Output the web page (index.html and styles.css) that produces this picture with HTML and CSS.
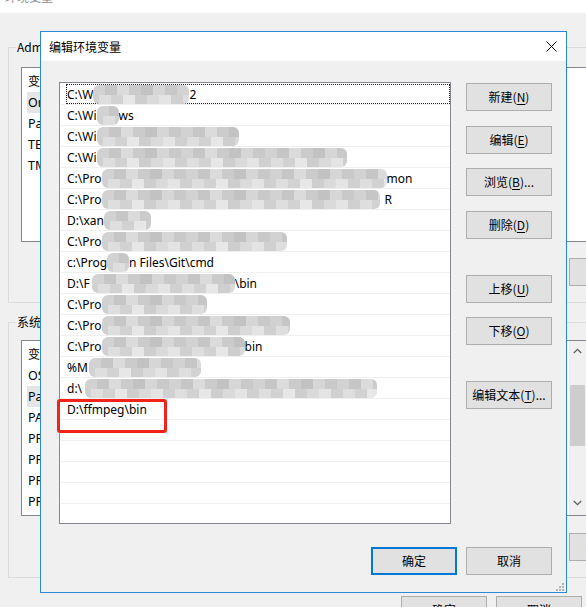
FILE: index.html
```html
<!DOCTYPE html>
<html lang="zh-CN">
<head>
<meta charset="utf-8">
<title>编辑环境变量</title>
<link rel="stylesheet" href="styles.css">
</head>
<body>
<div class="bgwin">
  <div class="bg-title"><span>环境变量</span></div>
  <div class="bg-body">
    <div class="group g1">
      <div class="glabel">Administrator 的用户变量(U)</div>
      <div class="lv lv1">
        <div class="lv-head"><span class="col1">变量</span><span>值</span></div>
        <div class="lv-row sel">OneDrive</div>
        <div class="lv-row">Path</div>
        <div class="lv-row">TEMP</div>
        <div class="lv-row">TMP</div>
      </div>
      <div class="gbtns">
        <button class="btn">新建(N)...</button>
        <button class="btn">编辑(E)...</button>
      </div>
    </div>
    <div class="group g2">
      <div class="glabel">系统变量(S)</div>
      <div class="lv lv2">
        <div class="lv-main">
          <div class="lv-head"><span class="col1">变量</span><span>值</span></div>
          <div class="lv-row">OS</div>
          <div class="lv-row sel">Path</div>
          <div class="lv-row">PATHEXT</div>
          <div class="lv-row">PROCESSOR_ARCHITECTURE</div>
          <div class="lv-row">PROCESSOR_IDENTIFIER</div>
          <div class="lv-row">PROCESSOR_LEVEL</div>
          <div class="lv-row">PROCESSOR_REVISION</div>
        </div>
        <div class="vscroll">
          <div class="sb-arrow">
            <svg width="9" height="6" viewBox="0 0 9 6"><polyline points="0.8,5 4.5,1.3 8.2,5" fill="none" stroke="#606060" stroke-width="1.3"/></svg>
          </div>
          <div class="sb-thumb"></div>
          <div class="sb-arrow sb-down">
            <svg width="9" height="6" viewBox="0 0 9 6"><polyline points="0.8,1 4.5,4.7 8.2,1" fill="none" stroke="#606060" stroke-width="1.3"/></svg>
          </div>
        </div>
      </div>
      <div class="gbtns g2btns">
        <button class="btn">新建(W)...</button>
        <button class="btn">编辑(I)...</button>
      </div>
    </div>
    <div class="bg-foot">
      <button class="btn">确定</button>
      <button class="btn">取消</button>
    </div>
  </div>
</div>

<div class="dialog">
  <div class="dlg-title">
    <span>编辑环境变量</span>
    <svg class="close" width="11" height="11" viewBox="0 0 11 11"><path d="M0.5 0.5 L10.5 10.5 M10.5 0.5 L0.5 10.5" stroke="#000" stroke-width="1"/></svg>
  </div>
  <div class="dlg-body">
    <div class="list-wrap">
      <div class="plist">
        <div class="prow focus"><div class="pcell"><span>C:\W</span><i class="mz m1"></i><span>2</span></div></div>
        <div class="prow"><div class="pcell"><span>C:\Wi</span><i class="mz m2"></i><span>ws</span></div></div>
        <div class="prow"><div class="pcell"><span>C:\Wi</span><i class="mz m3"></i></div></div>
        <div class="prow"><div class="pcell"><span>C:\Wi</span><i class="mz m4"></i></div></div>
        <div class="prow"><div class="pcell"><span>C:\Pro</span><i class="mz m5"></i><span>mon</span></div></div>
        <div class="prow"><div class="pcell"><span>C:\Pro</span><i class="mz m6"></i><span>R</span></div></div>
        <div class="prow"><div class="pcell"><span>D:\xan</span><i class="mz m7"></i></div></div>
        <div class="prow"><div class="pcell"><span>C:\Pro</span><i class="mz m8"></i></div></div>
        <div class="prow"><div class="pcell"><span>c:\Prog</span><i class="mz m9"></i><span>n Files\Git\cmd</span></div></div>
        <div class="prow"><div class="pcell"><span>D:\F</span><i class="mz m10"></i><span>\bin</span></div></div>
        <div class="prow"><div class="pcell"><span>C:\Pro</span><i class="mz m11"></i></div></div>
        <div class="prow"><div class="pcell"><span>C:\Pro</span><i class="mz m12"></i></div></div>
        <div class="prow"><div class="pcell"><span>C:\Pro</span><i class="mz m13"></i><span>bin</span></div></div>
        <div class="prow"><div class="pcell"><span>%M</span><i class="mz m14"></i></div></div>
        <div class="prow"><div class="pcell"><span>d:\</span><i class="mz m15"></i></div></div>
        <div class="prow"><div class="pcell"><span>D:\ffmpeg\bin</span></div></div>
        <div class="prow"><div class="pcell"></div></div>
        <div class="prow"><div class="pcell"></div></div>
        <div class="prow"><div class="pcell"></div></div>
        <div class="prow"><div class="pcell"></div></div>
        <div class="prow"><div class="pcell"></div></div>
      </div>
      <div class="mark"></div>
    </div>
    <div class="pbtns">
      <button class="btn">新建(<u>N</u>)</button>
      <button class="btn g15">编辑(<u>E</u>)</button>
      <button class="btn">浏览(<u>B</u>)...</button>
      <button class="btn g15">删除(<u>D</u>)</button>
      <button class="btn g36">上移(<u>U</u>)</button>
      <button class="btn">下移(<u>O</u>)</button>
      <button class="btn g36">编辑文本(<u>T</u>)...</button>
    </div>
    <div class="dlg-foot">
      <button class="btn default">确定</button>
      <button class="btn">取消</button>
    </div>
  </div>
  <svg class="grip" width="9" height="9" viewBox="0 0 9 9">
    <rect x="7" y="1" width="2" height="2" fill="#b5b5b5"/>
    <rect x="4" y="4" width="2" height="2" fill="#b5b5b5"/>
    <rect x="7" y="4" width="2" height="2" fill="#b5b5b5"/>
    <rect x="1" y="7" width="2" height="2" fill="#b5b5b5"/>
    <rect x="4" y="7" width="2" height="2" fill="#b5b5b5"/>
    <rect x="7" y="7" width="2" height="2" fill="#b5b5b5"/>
  </svg>
</div>
</body>
</html>
```
FILE: styles.css
```css
* { box-sizing: border-box; }
html, body { margin: 0; padding: 0; overflow: hidden; }
body {
  width: 586px;
  height: 607px;
  position: relative;
  background: #f0f0f0;
  font-family: "Noto Sans", "Noto Sans CJK SC", sans-serif;
  font-size: 12px;
  color: #000;
}

/* ---------- background window ---------- */
.bg-title {
  height: 13px;
  background: #fff;
  overflow: hidden;
  padding-left: 5px;
}
.bg-title span {
  display: block;
  margin-top: -11px;
  line-height: 16px;
  color: #8a8a8a;
  font-family: "Noto Sans CJK SC", sans-serif;
  font-size: 12px;
}
.bg-body { padding-left: 8px; width: 720px; }
.group {
  border: 1px solid #dcdcdc;
  height: 256px;
  width: 680px;
}
.g1 { margin-top: 34px; }
.g2 { margin-top: 19px; }
.glabel {
  width: max-content;
  height: 16px;
  line-height: 16px;
  margin: -9px 0 0 7px;
  padding: 0 1px;
  background: #f0f0f0;
  font-family: "Noto Sans CJK SC", sans-serif;
  font-size: 12px;
}
.lv {
  margin-left: 12px;
  width: 566px;
  background: #fff;
  border: 1px solid #828790;
  overflow: hidden;
}
.lv1 { margin-top: 12px; height: 175px; }
.lv2 { margin-top: 10px; height: 176px; display: flex; }
.lv-main { flex: 1; }
.lv-head {
  height: 24px;
  display: flex;
  align-items: center;
  padding-left: 6px;
  font-family: "Noto Sans CJK SC", sans-serif;
}
.lv-head .col1 { width: 160px; }
.lv-row {
  height: 21px;
  display: flex;
  align-items: center;
  padding-left: 6px;
  font-size: 12.5px;
}
.lv-row.sel {
  background: #e5e5e5;
  margin-left: 5px;
  padding-left: 1px;
  width: 200px;
}
.vscroll {
  width: 17px;
  background: #f0f0f0;
  display: flex;
  flex-direction: column;
}
.sb-arrow {
  height: 20px;
  display: flex;
  align-items: center;
  justify-content: center;
}
.sb-thumb {
  height: 61px;
  margin: 24px 1px 0 1px;
  background: #cdcdcd;
}
.sb-down { margin-top: auto; margin-bottom: 2px; }
.gbtns {
  display: flex;
  gap: 9px;
  margin: 16px 0 0 560px;
}
.g2btns { margin-top: 17px; }
.bg-foot {
  display: flex;
  gap: 9px;
  margin: 18px 0 0 393px;
}

/* ---------- buttons ---------- */
.btn {
  flex: none;
  width: 86px;
  height: 28px;
  padding: 0;
  margin: 0;
  background: #e1e1e1;
  border: 1px solid #adadad;
  border-radius: 0;
  font-family: "Noto Sans CJK SC", sans-serif;
  font-size: 12px;
  color: #000;
  line-height: 1;
  display: flex;
  align-items: center;
  justify-content: center;
}
.btn u { text-underline-offset: 2px; }
.btn.default { border: 2px solid #0078d7; }

/* ---------- dialog ---------- */
.dialog {
  position: absolute;
  left: 40px;
  top: 31px;
  width: 527px;
  height: 562px;
  border: 1px solid #2b88d8;
  background: #f0f0f0;
  display: flex;
  flex-direction: column;
}
.dlg-title {
  height: 29px;
  flex: none;
  background: #fff;
  display: flex;
  align-items: center;
  justify-content: space-between;
  padding: 0 9px 0 8px;
  font-family: "Noto Sans CJK SC", sans-serif;
  font-size: 12px;
}
.dlg-body {
  flex: 1;
  display: grid;
  grid-template-columns: 392px 86px;
  grid-template-rows: 442px 28px;
  column-gap: 15px;
  row-gap: 23px;
  padding: 21px 14px 17px 18px;
}
.list-wrap { position: relative; }
.plist {
  height: 100%;
  background: #fff;
  border: 1px solid #828790;
  padding-top: 1px;
  overflow: hidden;
}
.prow {
  height: 21px;
  margin-left: 1px;
  padding-left: 5px;
  border-bottom: 1px solid #f0f0f0;
  display: flex;
}
.pcell {
  flex: 1;
  display: flex;
  align-items: center;
  padding-top: 1px;
  border: 1px solid transparent;
  border-right: 0;
  white-space: pre;
  font-size: 12px;
}
.prow.focus .pcell { border: 1px dotted #222; }
.mark {
  position: absolute;
  left: -2px;
  top: 317px;
  width: 110px;
  height: 34px;
  border: 3px solid #f2231a;
  border-radius: 3px;
}

/* pixelated mosaic covering hidden text */
.mz {
  flex: none;
  display: block;
  height: 19px;
  border-radius: 6px;
  background-image:
    linear-gradient(90deg, #d2d2d2 0 12px, #c6c6c6 12px 24px, #dbdbdb 24px 36px, #cbcbcb 36px 48px, #c2c2c2 48px 60px, #d6d6d6 60px 72px, #c9c9c9 72px 84px),
    linear-gradient(90deg, #dedede 0 12px, #d2d2d2 12px 24px, #e7e7e7 24px 36px, #cecece 36px 48px, #dadada 48px 60px, #e4e4e4 60px 72px, #d0d0d0 72px 84px);
  background-size: 84px 10px, 84px 9px;
  background-position: 0 0, 6px 10px;
  background-repeat: repeat-x;
  filter: blur(0.6px);
}
.m1 { width: 96px; }
.m2 { width: 22px; }
.m3 { width: 142px; }
.m4 { width: 250px; }
.m5 { width: 285px; }
.m6 { width: 278px; margin-right: 5px; }
.m7 { width: 47px; }
.m8 { width: 185px; }
.m9 { width: 22px; }
.m10 { width: 143px; margin-left: 2px; }
.m11 { width: 105px; }
.m12 { width: 188px; }
.m13 { width: 143px; }
.m14 { width: 112px; margin-left: 1px; }
.m15 { width: 292px; margin-left: 3px; }

.pbtns {
  display: flex;
  flex-direction: column;
  padding-top: 1px;
}
.pbtns .btn + .btn { margin-top: 14px; }
.pbtns .btn.g15 { margin-top: 15px; }
.pbtns .btn.g36 { margin-top: 36px; }
.dlg-foot {
  grid-column: 1 / -1;
  justify-self: end;
  display: flex;
  gap: 9px;
}
.grip {
  position: absolute;
  left: 514px;
  top: 550px;
}
```
